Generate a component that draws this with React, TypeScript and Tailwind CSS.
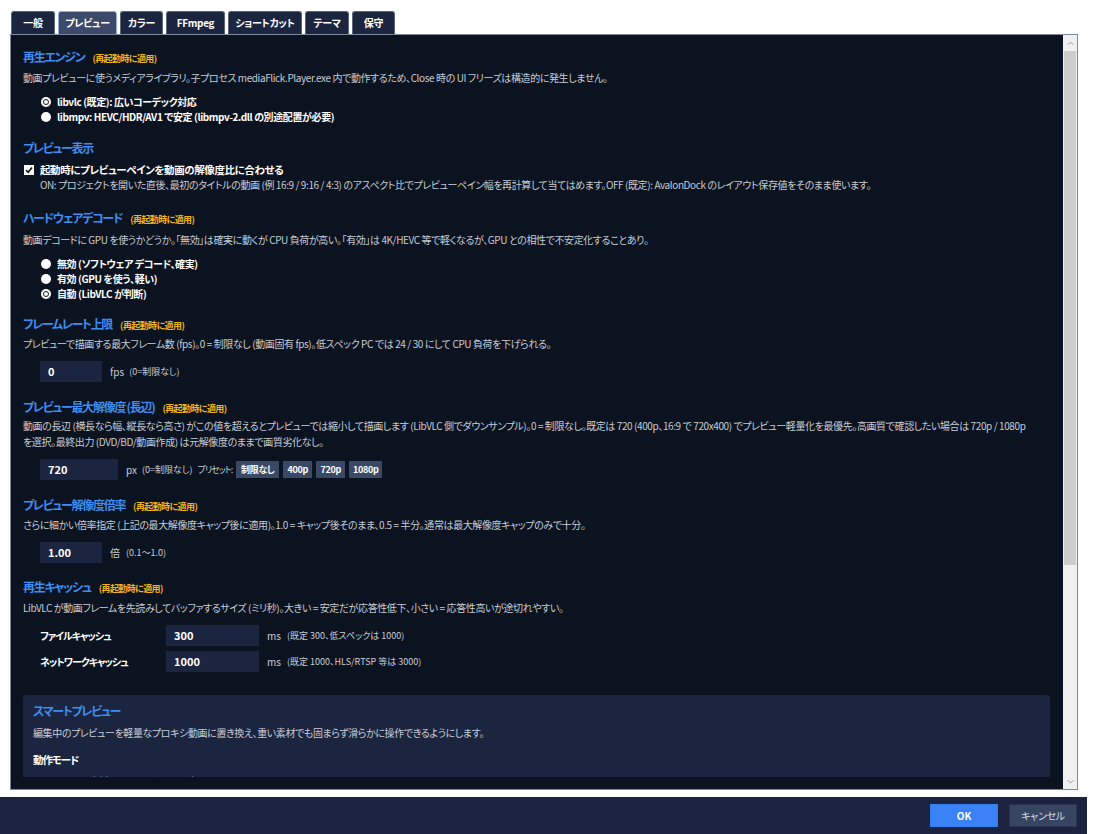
import React from "react";

const tabs = [
  { label: "一般", w: "w-[44px]" },
  { label: "プレビュー", w: "w-[59px]" },
  { label: "カラー", w: "w-[43px]" },
  { label: "FFmpeg", w: "w-[59px]" },
  { label: "ショートカット", w: "w-[74px]" },
  { label: "テーマ", w: "w-[44px]" },
  { label: "保守", w: "w-[43px]" },
];

function Heading({ title, note }: { title: string; note?: boolean }) {
  return (
    <div className="flex items-baseline gap-[8px] h-[18px] leading-[18px]">
      <span className="text-[12px] font-semibold tracking-[-1.3px] text-[#3d8ef2]">{title}</span>
      {note && <span className="text-[9px] font-bold tracking-[-0.6px] text-[#f2b320]">(再起動時に適用)</span>}
    </div>
  );
}

function Desc({ children }: { children: React.ReactNode }) {
  return (
    <div className="text-[10px] leading-[16px] tracking-[-0.4px] text-[#c6ccd6] whitespace-nowrap">{children}</div>
  );
}

function Radio({ label, checked }: { label: string; checked?: boolean }) {
  return (
    <div className="flex items-center h-[15px] pl-[18px]">
      <div className="w-[10px] h-[10px] rounded-full bg-white flex items-center justify-center">
        {checked && <div className="w-[6px] h-[6px] rounded-full border-[1.5px] border-[#151a24] bg-white" />}
      </div>
      <span className="ml-[6px] text-[10px] leading-[15px] font-semibold tracking-[-0.4px] text-white">{label}</span>
    </div>
  );
}

function Input({ value, w }: { value: string; w: string }) {
  return (
    <div className={`${w} h-[21px] shrink-0 bg-[#1c2540] flex items-center pl-[8px] text-[11px] leading-[21px] font-semibold text-white`}>
      {value}
    </div>
  );
}

function Small({ children, className = "" }: { children: React.ReactNode; className?: string }) {
  return <span className={`text-[9px] leading-[21px] text-[#c6ccd6] ${className}`}>{children}</span>;
}

export default function App() {
  return (
    <div
      className="w-[1100px] h-[834px] bg-white flex flex-col overflow-hidden text-[11px] leading-[16px] [font-feature-settings:'palt']"
      style={{ fontFamily: '"Noto Sans CJK JP", "Noto Sans", sans-serif' }}
    >
      {/* Tabs */}
      <div className="flex gap-[3px] pl-[11px] pt-[11px]">
        {tabs.map((t, i) => (
          <div
            key={t.label}
            className={`${t.w} h-[23px] flex items-center justify-center rounded-t-[3px] border border-b-0 text-[10px] font-semibold tracking-[-0.3px] text-white ${
              i === 1 ? "bg-[#3b4a6a] border-[#8fb0e0]" : "bg-[#1c2540] border-[#5c6578]"
            }`}
          >
            {t.label}
          </div>
        ))}
      </div>

      {/* Panel */}
      <div className="ml-[10px] w-[1068px] h-[756px] border border-[#7d889c] bg-[#0c1320] flex">
        <div className="flex-1 pl-[12px] pr-[13px] pt-[13px] pb-[12px] min-w-0">
          <div className="h-[729px] overflow-hidden">
            <Heading title="再生エンジン" note />
            <div className="mt-[4px]">
              <Desc>動画プレビューに使うメディアライブラリ。子プロセス mediaFlick.Player.exe 内で動作するため、Close 時の UI フリーズは構造的に発生しません。</Desc>
            </div>
            <div className="mt-[8px]">
              <Radio label="libvlc (既定): 広いコーデック対応" checked />
              <Radio label="libmpv: HEVC/HDR/AV1 で安定 (libmpv-2.dll の別途配置が必要)" />
            </div>

            <div className="mt-[15px]">
              <Heading title="プレビュー表示" />
            </div>
            <div className="mt-[5px] flex items-center h-[15px] pl-[1px]">
              <div className="w-[10px] h-[10px] bg-white flex items-center justify-center">
                <svg width="8" height="8" viewBox="0 0 8 8">
                  <path d="M1 4.2 L3.2 6.3 L7 1.5" stroke="#111" strokeWidth="1.6" fill="none" />
                </svg>
              </div>
              <span className="ml-[6px] text-[10.5px] leading-[15px] font-semibold tracking-[-0.4px] text-white">
                起動時にプレビューペインを動画の解像度比に合わせる
              </span>
            </div>
            <div className="pl-[17px] text-[10px] leading-[16px] tracking-[-0.4px] text-[#c6ccd6] whitespace-nowrap">
              ON: プロジェクトを開いた直後、最初のタイトルの動画 (例 16:9 / 9:16 / 4:3) のアスペクト比でプレビューペイン幅を再計算して当てはめます。OFF (既定): AvalonDock のレイアウト保存値をそのまま使います。
            </div>

            <div className="mt-[16px]">
              <Heading title="ハードウェアデコード" note />
            </div>
            <div className="mt-[5px]">
              <Desc>動画デコードに GPU を使うかどうか。「無効」は確実に動くが CPU 負荷が高い。「有効」は 4K/HEVC 等で軽くなるが、GPU との相性で不安定化することあり。</Desc>
            </div>
            <div className="mt-[8px]">
              <Radio label="無効 (ソフトウェア デコード、確実)" />
              <Radio label="有効 (GPU を使う、軽い)" />
              <Radio label="自動 (LibVLC が判断)" checked />
            </div>

            <div className="mt-[14px]">
              <Heading title="フレームレート上限" note />
            </div>
            <div className="mt-[3px]">
              <Desc>プレビューで描画する最大フレーム数 (fps)。0 = 制限なし (動画固有 fps)。低スペック PC では 24 / 30 にして CPU 負荷を下げられる。</Desc>
            </div>
            <div className="mt-[9px] pl-[17px] flex items-center h-[21px]">
              <Input value="0" w="w-[62px]" />
              <span className="ml-[8px] text-[10px] leading-[21px] text-[#c6ccd6]">fps</span>
              <Small className="ml-[5px]">(0=制限なし)</Small>
            </div>

            <div className="mt-[16px]">
              <Heading title="プレビュー最大解像度 (長辺)" note />
            </div>
            <div className="mt-[2px]">
              <Desc>動画の長辺 (横長なら幅、縦長なら高さ) がこの値を超えるとプレビューでは縮小して描画します (LibVLC 側でダウンサンプル)。0 = 制限なし。既定は 720 (400p、16:9 で 720x400) でプレビュー軽量化を最優先。高画質で確認したい場合は 720p / 1080p</Desc>
              <Desc>を選択。最終出力 (DVD/BD/動画作成) は元解像度のままで画質劣化なし。</Desc>
            </div>
            <div className="mt-[9px] pl-[17px] flex items-center h-[21px]">
              <Input value="720" w="w-[78px]" />
              <span className="ml-[8px] text-[10px] leading-[21px] text-[#c6ccd6]">px</span>
              <Small className="ml-[5px]">(0=制限なし)</Small>
              <Small className="ml-[5px] tracking-[-1px]">プリセット:</Small>
              <div className="ml-[4px] flex gap-[4px]">
                {[
                  ["制限なし", "w-[43px]"],
                  ["400p", "w-[29px]"],
                  ["720p", "w-[29px]"],
                  ["1080p", "w-[33px]"],
                ].map(([p, w]) => (
                  <div
                    key={p}
                    className={`${w} h-[17px] bg-[#3a4966] flex items-center justify-center text-[9px] leading-[17px] font-semibold tracking-[-0.3px] text-white`}
                  >
                    {p}
                  </div>
                ))}
              </div>
            </div>

            <div className="mt-[16px]">
              <Heading title="プレビュー解像度倍率" note />
            </div>
            <div className="mt-[3px]">
              <Desc>さらに細かい倍率指定 (上記の最大解像度キャップ後に適用)。1.0 = キャップ後そのまま、0.5 = 半分。通常は最大解像度キャップのみで十分。</Desc>
            </div>
            <div className="mt-[9px] pl-[17px] flex items-center h-[21px]">
              <Input value="1.00" w="w-[62px]" />
              <span className="ml-[8px] text-[10px] leading-[21px] text-[#c6ccd6]">倍</span>
              <Small className="ml-[6px]">(0.1〜1.0)</Small>
            </div>

            <div className="mt-[15px]">
              <Heading title="再生キャッシュ" note />
            </div>
            <div className="mt-[4px]">
              <Desc>LibVLC が動画フレームを先読みしてバッファするサイズ (ミリ秒)。大きい = 安定だが応答性低下、小さい = 応答性高いが途切れやすい。</Desc>
            </div>
            <div className="mt-[9px] pl-[17px] flex flex-col gap-[5px]">
              {[
                ["ファイルキャッシュ", "300", "(既定 300、低スペックは 1000)"],
                ["ネットワークキャッシュ", "1000", "(既定 1000、HLS/RTSP 等は 3000)"],
              ].map(([l, v, n]) => (
                <div key={l} className="flex items-center h-[21px]">
                  <span className="w-[126px] text-[10px] leading-[21px] font-semibold tracking-[-1px] text-white">{l}</span>
                  <Input value={v} w="w-[93px]" />
                  <span className="ml-[8px] text-[10px] leading-[21px] text-[#c6ccd6]">ms</span>
                  <Small className="ml-[6px]">{n}</Small>
                </div>
              ))}
            </div>

            {/* Smart preview card */}
            <div className="mt-[23px] rounded-[4px] bg-[#1c2540] px-[10px] pt-[7px] pb-[20px]">
              <Heading title="スマートプレビュー" />
              <div className="mt-[5px]">
                <Desc>編集中のプレビューを軽量なプロキシ動画に置き換え、重い素材でも固まらず滑らかに操作できるようにします。</Desc>
              </div>
              <div className="mt-[11px] text-[10.5px] leading-[16px] font-semibold tracking-[-1px] text-white">動作モード</div>
              <div className="mt-[6px]">
                <Radio label="オフ: 素材をそのまま使って再生" checked />
              </div>
            </div>
          </div>
        </div>

        {/* Scrollbar */}
        <div className="w-[14px] bg-[#f0f0f0] flex flex-col">
          <div className="h-[16px] flex items-center justify-center">
            <svg width="7" height="5" viewBox="0 0 7 5">
              <path d="M0.5 4 L3.5 1 L6.5 4" stroke="#a0a0a0" strokeWidth="1" fill="none" />
            </svg>
          </div>
          <div className="h-[514px] mx-[1px] bg-[#cdcdcd]" />
          <div className="flex-1" />
          <div className="h-[16px] flex items-center justify-center">
            <svg width="7" height="5" viewBox="0 0 7 5">
              <path d="M0.5 1 L3.5 4 L6.5 1" stroke="#a0a0a0" strokeWidth="1" fill="none" />
            </svg>
          </div>
        </div>
      </div>

      {/* Footer */}
      <div className="mt-[7px] w-[1087px] h-[37px] bg-[#1c2340] flex items-center justify-end gap-[11px] pr-[10px]">
        <div className="w-[68px] h-[23px] bg-[#3b82f6] border border-[#2f7ff0] flex items-center justify-center text-[10px] font-bold text-white">
          OK
        </div>
        <div className="w-[68px] h-[23px] bg-[#374462] border border-[#2a3450] flex items-center justify-center text-[10px] tracking-[-0.3px] text-[#d8dde6]">
          キャンセル
        </div>
      </div>
    </div>
  );
}
